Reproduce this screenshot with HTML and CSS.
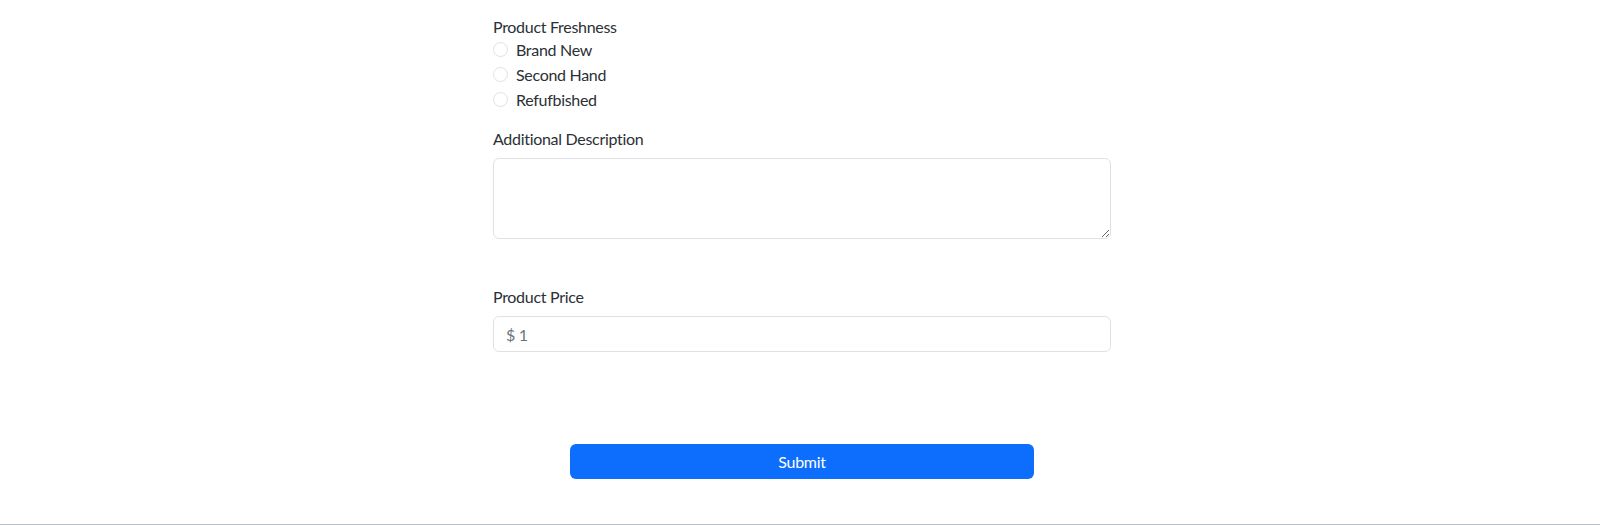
FILE: index.html
```html
<!DOCTYPE html>
<html lang="en">
<head>
<meta charset="utf-8">
<title>Product Form</title>
<link rel="stylesheet" href="styles.css">
</head>
<body>
<div class="page">
  <form class="form">
    <div class="group">
      <div class="label group-title">Product Freshness</div>
      <label class="check"><input type="radio" name="fresh" class="radio"><span>Brand New</span></label>
      <label class="check"><input type="radio" name="fresh" class="radio"><span>Second Hand</span></label>
      <label class="check"><input type="radio" name="fresh" class="radio"><span>Refufbished</span></label>
    </div>
    <div class="group desc">
      <label class="label field-label" for="desc">Additional Description</label>
      <textarea id="desc" class="control area"></textarea>
    </div>
    <div class="group price">
      <label class="label field-label" for="price">Product Price</label>
      <input id="price" class="control input" type="text" value="$ 1">
    </div>
    <div class="actions">
      <button type="button" class="btn">Submit</button>
    </div>
  </form>
</div>
</body>
</html>
```
FILE: styles.css
```css
* { box-sizing: border-box; }
html, body { margin: 0; padding: 0; background: #fff; }
body {
  font-family: Lato, "Open Sans", sans-serif;
  font-size: 16px;
  line-height: 24px;
  letter-spacing: -0.3px;
  color: #2b3035;
}
.page {
  min-height: 525px;
  border-bottom: 1px solid #b9c0c6;
  padding-top: 17px;
}
.form {
  width: 618px;
  margin-left: calc(50% - 307px);
  display: flex;
  flex-direction: column;
}
.group { display: flex; flex-direction: column; }
.label { display: block; }
.group-title { line-height: 20px; }
.check {
  display: flex;
  align-items: center;
  gap: 8px;
  height: 25px;
}
.radio {
  appearance: none;
  -webkit-appearance: none;
  width: 15px;
  height: 15px;
  margin: 0;
  border: 1px solid #dee2e6;
  border-radius: 50%;
  background: #fff;
}
.desc { margin-top: 15px; }
.field-label { margin-bottom: 7px; }
.control {
  font: inherit;
  letter-spacing: inherit;
  color: #6c757d;
  border: 1px solid #dee2e6;
  border-radius: 6px;
  padding: 6px 12px;
  width: 100%;
  background: #fff;
  outline: none;
}
.area { height: 81px; resize: vertical; display: block; }
.price { margin-top: 46px; }
.input { height: 36px; }
.actions {
  display: flex;
  justify-content: center;
  margin-top: 92px;
}
.btn {
  width: 75%;
  height: 35px;
  background: #0d6efd;
  color: #fff;
  border: none;
  border-radius: 6px;
  font: inherit;
  letter-spacing: inherit;
  cursor: pointer;
}
```
